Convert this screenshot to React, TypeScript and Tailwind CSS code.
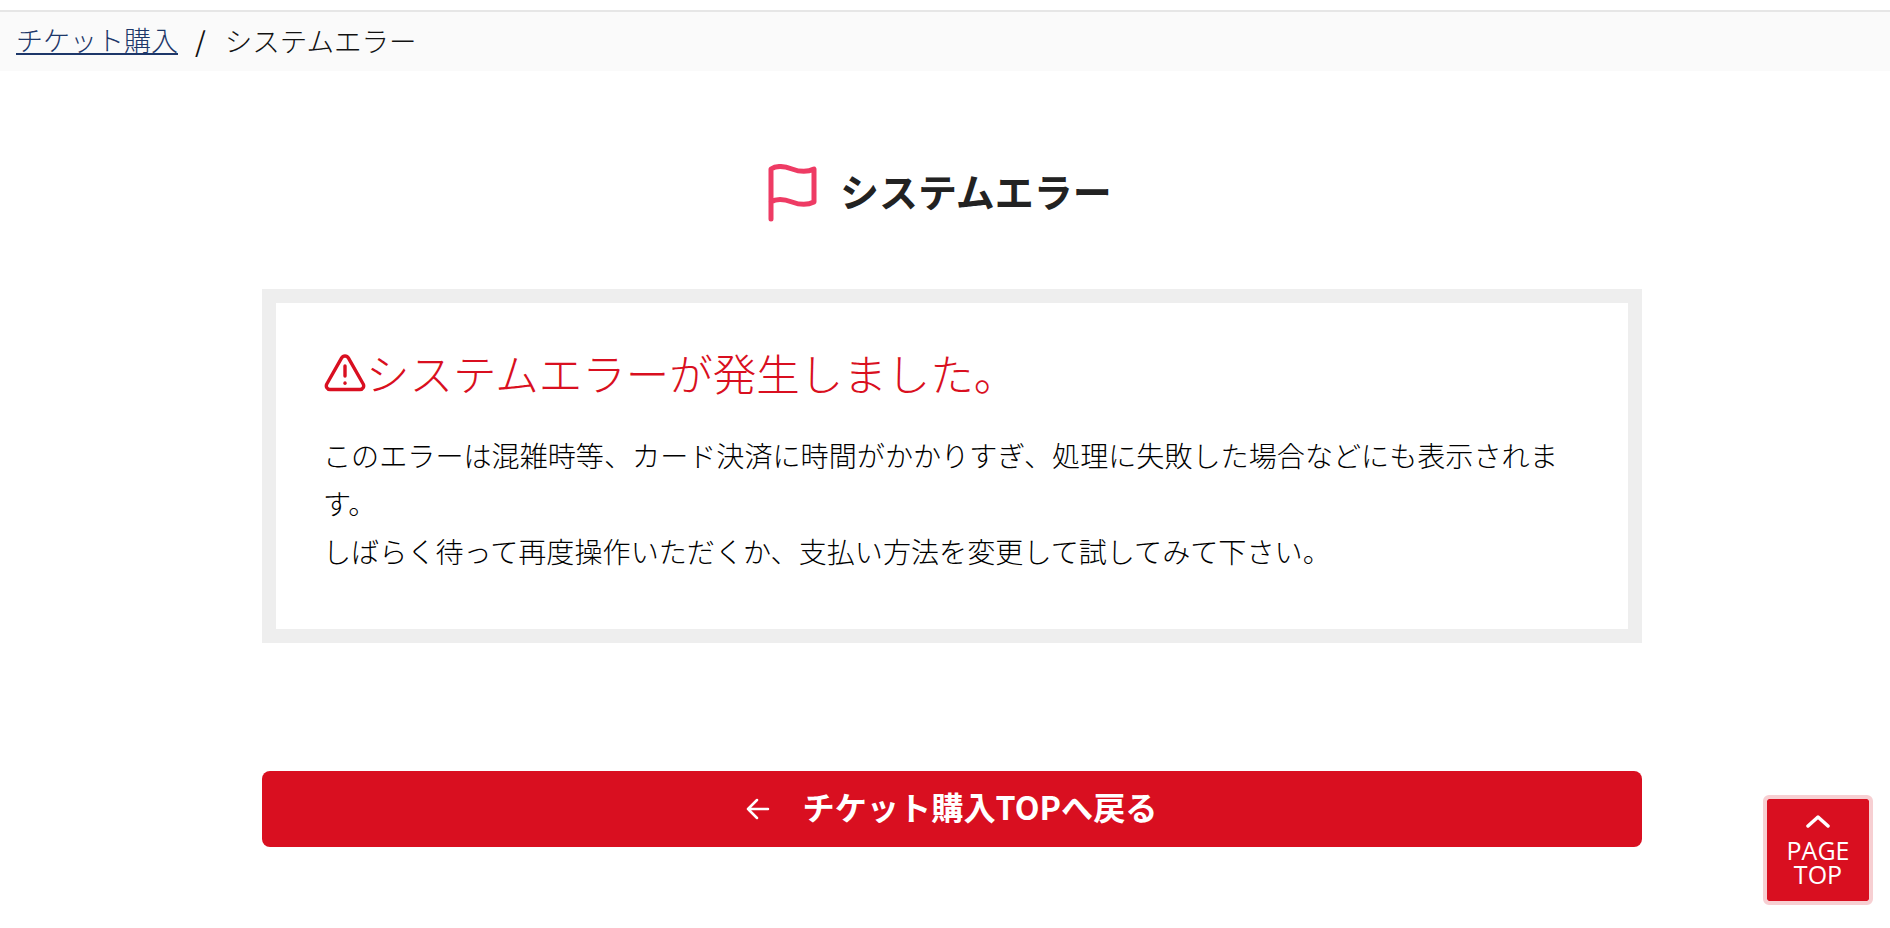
export default function App() {
  return (
    <div className="relative h-[928px] overflow-hidden bg-white font-['Noto_Sans_CJK_JP','Noto_Sans',sans-serif] text-[#111111]">
      <div className="h-[10px]" />
      <nav className="flex h-[61px] items-center border-t-2 border-[#e6e6e6] bg-[#fafafa] pb-[2px] pl-4 text-[27.500px] font-light">
        <a className="text-[27px] text-[#1d3769] underline underline-offset-2">チケット購入</a>
        <span className="mr-[19px] ml-[17px] font-normal">/</span>
        <span>システムエラー</span>
      </nav>
      <div className="mt-[93px] ml-[768px] flex items-center gap-[22px]">
        <svg width="50" height="58" viewBox="0 0 50 58" fill="none" stroke="#ee3b64" strokeWidth="5" strokeLinecap="round" strokeLinejoin="round">
          <path d="M3 55V5C9 1 16 2 24 5C32 8 40 8 46 5V38C40 41 32 41 24 38C16 35 9 34 3 38" />
        </svg>
        <h1 className="pb-[5px] text-[39px] leading-none font-bold text-[#222222]">システムエラー</h1>
      </div>
      <div className="mt-[67px] ml-[262px] box-border h-[354px] w-[1380px] border-[14px] border-[#eeeeee] px-[49px] pt-[40px]">
        <h2 className="flex items-center text-[43.500px] leading-[60px] font-light text-[#d90f20]">
          <svg className="-ml-[1px] shrink-0" width="42" height="40" viewBox="0 0 42 40" fill="none" stroke="#d90f20" strokeWidth="3.4" strokeLinecap="round" strokeLinejoin="round">
            <path d="M21 3C19.500 3 18.300 3.800 17.500 5.200L2.800 31C1.500 33.500 3 36.500 6 36.500H36C39 36.500 40.500 33.500 39.200 31L24.500 5.200C23.700 3.800 22.500 3 21 3Z" />
            <path d="M21 13V23" />
            <path d="M21 30V30.200" />
          </svg>
          <span>システムエラーが発生しました。</span>
        </h2>
        <p className="mt-[28px] -ml-[2px] text-[28.100px] leading-[48px] font-light text-black">
          このエラーは混雑時等、カード決済に時間がかかりすぎ、処理に失敗した場合などにも表示されます。
          <br />
          しばらく待って再度操作いただくか、支払い方法を変更して試してみて下さい。
        </p>
      </div>
      <a className="mt-[128px] ml-[262px] flex h-[76px] w-[1380px] items-center justify-center rounded-lg bg-[#d90f20] pb-[6px] text-[32.200px] font-bold text-white">
        <svg className="mt-[6px] mr-[32px]" width="24" height="24" viewBox="0 0 24 24" fill="none" stroke="white" strokeWidth="2.500" strokeLinecap="round" strokeLinejoin="round">
          <path d="M22 12H2M11 3L2 12L11 21" />
        </svg>
        チケット購入TOPへ戻る
      </a>
      <a className="absolute top-[795px] left-[1763px] box-border flex h-[110px] w-[110px] flex-col items-center rounded-md border-4 border-[#f7cfd2] bg-[#d90f20] bg-clip-padding pt-[15px] text-white">
        <svg width="24" height="14" viewBox="0 0 24 14" fill="none" stroke="white" strokeWidth="3.500" strokeLinecap="round" strokeLinejoin="round">
          <path d="M2 12L12 3L22 12" />
        </svg>
        <span className="mt-[10px] text-center text-[25px] leading-[24px] font-['Open_Sans',sans-serif]">PAGE<br />TOP</span>
      </a>
    </div>
  );
}
